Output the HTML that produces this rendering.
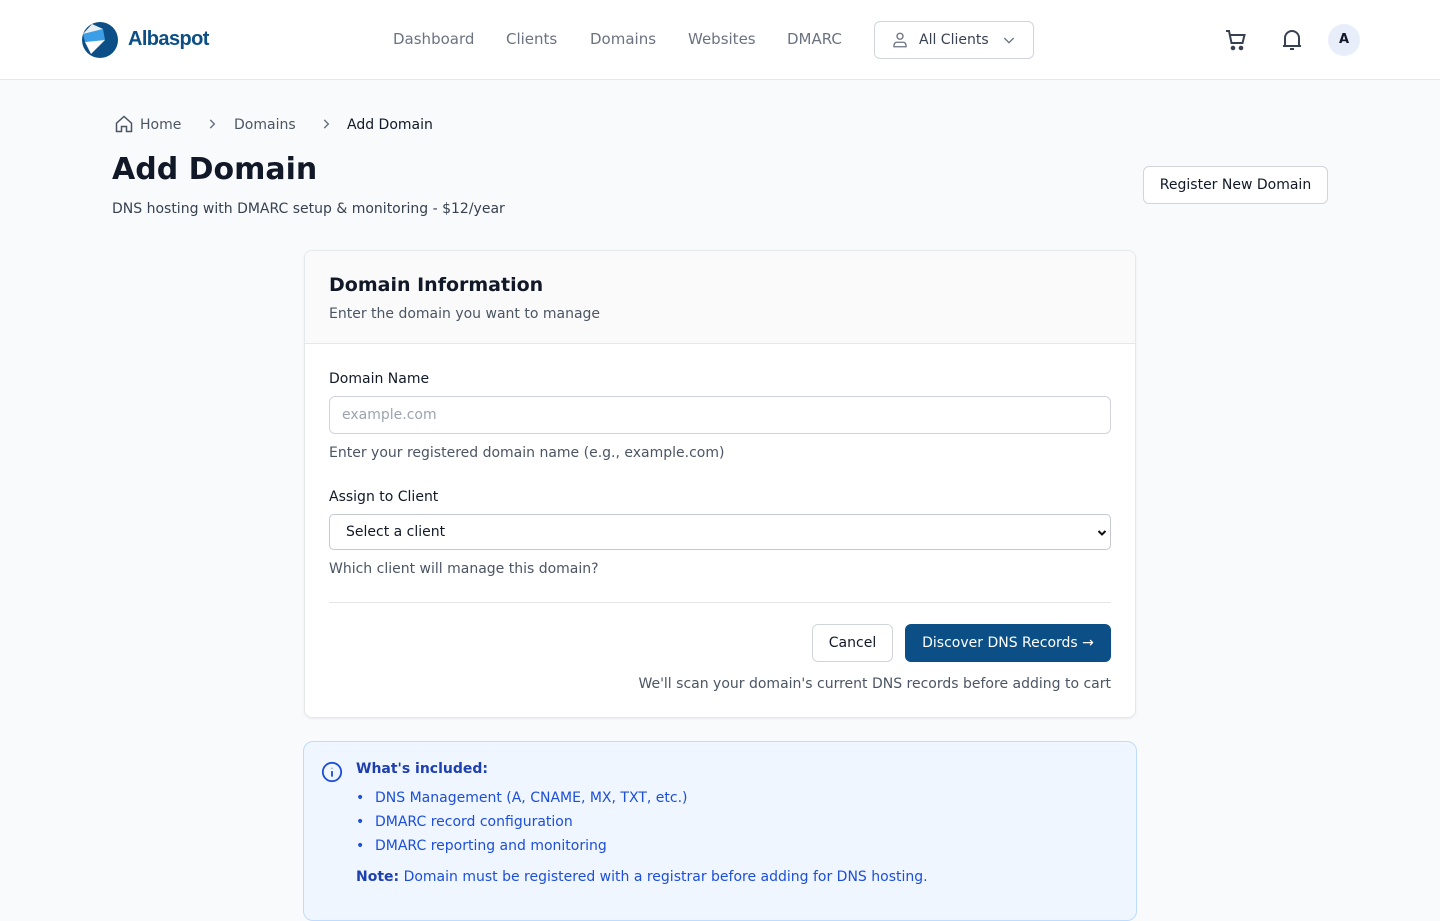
<!DOCTYPE html>
<html><head><meta charset="utf-8"><style>
*{box-sizing:border-box;margin:0;padding:0}
body{width:1440px;height:900px;overflow:hidden;background:#f9fafb;font-family:"DejaVu Sans","Liberation Sans",sans-serif;font-size:14px;color:#111827}
.hdr{position:absolute;top:0;left:0;width:1440px;height:80px;background:#fff;border-bottom:1px solid #e5e7eb}
.nav a{position:absolute;top:30px;font-size:15px;color:#6b7280;text-decoration:none}
.abs{position:absolute}
.muted{color:#4b5563}
</style></head><body>
<div class="hdr">
 <svg class="abs" style="left:81px;top:21px" width="38" height="38" viewBox="0 0 38 38"><circle cx="19" cy="19" r="18" fill="#0b4f86"/><path d="M2 13 L22 8 L24 19 L4 21 Z" fill="#3b9fe8"/><path d="M4 21 L24 19 L10 33 Z" fill="#fff"/><path d="M2 13 L22 8 L11 3 Z" fill="#fff" opacity=".9"/></svg>
 <div class="abs" style="left:128px;top:28px;font-family:'Liberation Sans',sans-serif;font-size:20px;font-weight:bold;color:#0b4f86;letter-spacing:-0.6px">Albaspot</div>
 <div class="nav"><a style="left:393px">Dashboard</a><a style="left:506px">Clients</a><a style="left:590px">Domains</a><a style="left:688px">Websites</a><a style="left:787px">DMARC</a></div>
 <div class="abs" style="left:874px;top:21px;width:160px;height:38px;border:1px solid #d1d5db;border-radius:6px">
  <svg class="abs" style="left:16px;top:9px" width="18" height="18" viewBox="0 0 24 24" fill="none" stroke="#6b7280" stroke-width="1.8"><circle cx="12" cy="7" r="4"/><path d="M4 21v-2a4 4 0 0 1 4-4h8a4 4 0 0 1 4 4v2z"/></svg>
  <span class="abs" style="left:44px;top:10px;font-size:14px;color:#374151">All Clients</span>
  <svg class="abs" style="left:126px;top:10px" width="16" height="16" viewBox="0 0 24 24" fill="none" stroke="#6b7280" stroke-width="2"><path d="M5 9l7 7 7-7"/></svg>
 </div>
 <svg class="abs" style="left:1224px;top:28px" width="24" height="24" viewBox="0 0 24 24" fill="none" stroke="#374151" stroke-width="2"><path d="M2 3h3l2.5 12h11l2-8H6.5"/><circle cx="9" cy="20" r="1.3" fill="#374151"/><circle cx="17" cy="20" r="1.3" fill="#374151"/></svg>
 <svg class="abs" style="left:1281px;top:28px" width="22" height="24" viewBox="0 0 22 24" fill="none" stroke="#374151" stroke-width="2"><path d="M4 18V10a7 7 0 0 1 14 0v8M2 18h18M9 21h4"/></svg>
 <div class="abs" style="left:1328px;top:24px;width:32px;height:32px;border-radius:50%;background:#e8eef9;text-align:center;line-height:32px;font-weight:bold;font-size:13px">A</div>
</div>
<svg class="abs" style="left:114px;top:114px" width="20" height="20" viewBox="0 0 24 24" fill="none" stroke="#4b5563" stroke-width="1.8"><path d="M3 11l9-8 9 8v10h-6v-6H9v6H3z"/></svg>
<span class="abs muted" style="left:140px;top:117px">Home</span>
<svg class="abs" style="left:205px;top:117px" width="14" height="14" viewBox="0 0 24 24" fill="none" stroke="#6b7280" stroke-width="2.5"><path d="M9 5l7 7-7 7"/></svg>
<span class="abs muted" style="left:234px;top:117px">Domains</span>
<svg class="abs" style="left:319px;top:117px" width="14" height="14" viewBox="0 0 24 24" fill="none" stroke="#6b7280" stroke-width="2.5"><path d="M9 5l7 7-7 7"/></svg>
<span class="abs" style="left:347px;top:117px;color:#111827">Add Domain</span>
<div class="abs" style="left:112px;top:152px;font-size:30px;font-weight:bold">Add Domain</div>
<div class="abs" style="left:112px;top:201px;color:#374151">DNS hosting with DMARC setup &amp; monitoring - $12/year</div>
<div class="abs" style="left:1143px;top:166px;width:185px;height:38px;border:1px solid #d1d5db;border-radius:6px;background:#fff;text-align:center;line-height:37px;color:#111827">Register New Domain</div>
<div class="abs" style="left:304px;top:250px;width:832px;height:468px;background:#fff;border:1px solid #e5e7eb;border-radius:8px;box-shadow:0 1px 2px rgba(0,0,0,.06);overflow:hidden">
 <div style="height:93px;background:#fafafa;border-bottom:1px solid #e5e7eb;position:relative">
  <div class="abs" style="left:24px;top:23px;font-size:19px;font-weight:bold">Domain Information</div>
  <div class="abs muted" style="left:24px;top:55px">Enter the domain you want to manage</div>
 </div>
 <div class="abs" style="left:24px;top:120px">Domain Name</div>
 <div class="abs" style="left:24px;top:145px;width:782px;height:38px;border:1px solid #d1d5db;border-radius:6px;padding:10px 12px;color:#9ca3af">example.com</div>
 <div class="abs muted" style="left:24px;top:194px">Enter your registered domain name (e.g., example.com)</div>
 <div class="abs" style="left:24px;top:238px">Assign to Client</div>
 <div class="abs" style="left:24px;top:263px;width:782px;height:36px;border:1px solid #c4c8ce;border-radius:5px;padding:9px 16px">Select a client
  <svg class="abs" style="right:2px;top:12px" width="12" height="12" viewBox="0 0 24 24" fill="none" stroke="#111" stroke-width="4"><path d="M5 8l7 7 7-7"/></svg></div>
 <div class="abs muted" style="left:24px;top:310px">Which client will manage this domain?</div>
 <div class="abs" style="left:24px;top:351px;width:782px;border-top:1px solid #e5e7eb"></div>
 <div class="abs" style="left:507px;top:373px;width:81px;height:38px;border:1px solid #d1d5db;border-radius:6px;text-align:center;line-height:36px">Cancel</div>
 <div class="abs" style="left:600px;top:373px;width:206px;height:38px;background:#0b4f86;border-radius:6px;text-align:center;line-height:38px;color:#fff">Discover DNS Records →</div>
 <div class="abs muted" style="right:24px;top:425px">We'll scan your domain's current DNS records before adding to cart</div>
</div>
<div class="abs" style="left:303px;top:741px;width:834px;height:180px;background:#eff6ff;border:1px solid #bfdbfe;border-radius:10px;color:#1d4ed8">
 <svg class="abs" style="left:17px;top:19px" width="22" height="22" viewBox="0 0 24 24" fill="none" stroke="#1d4ed8" stroke-width="2"><circle cx="12" cy="12" r="10"/><path d="M12 11v6M12 7.5v.5"/></svg>
 <div class="abs" style="left:52px;top:19px;font-weight:bold;color:#1e40af">What's included:</div>
 <div class="abs" style="left:52px;top:44px;line-height:24px">
  <div style="position:relative;padding-left:19px"><span class="abs" style="left:0">•</span>DNS Management (A, CNAME, MX, TXT, etc.)</div>
  <div style="position:relative;padding-left:19px"><span class="abs" style="left:0">•</span>DMARC record configuration</div>
  <div style="position:relative;padding-left:19px"><span class="abs" style="left:0">•</span>DMARC reporting and monitoring</div>
 </div>
 <div class="abs" style="left:52px;top:127px"><b style="color:#1e40af">Note:</b> Domain must be registered with a registrar before adding for DNS hosting.</div>
</div>
</body></html>
